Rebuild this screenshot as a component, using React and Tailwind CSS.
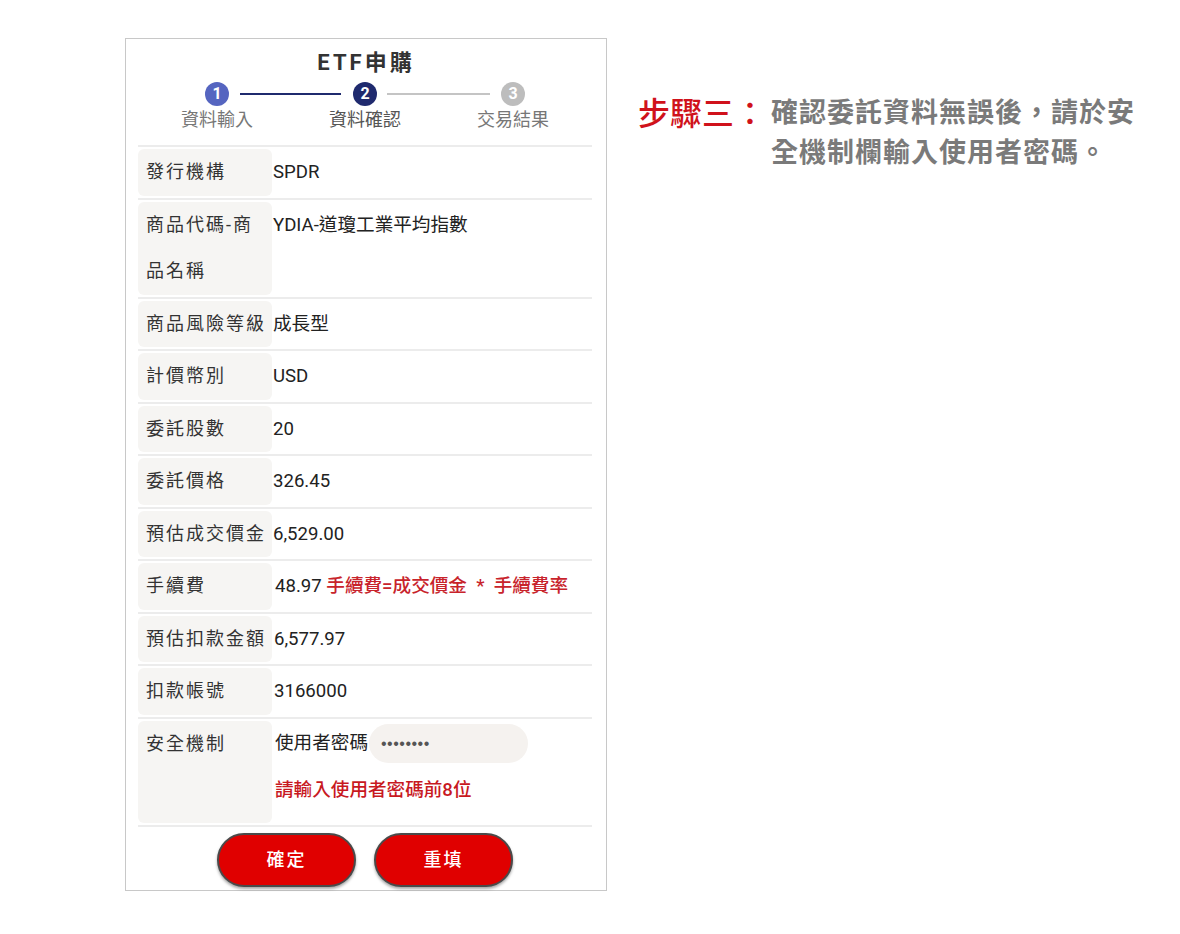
import React from 'react';

const rows = [
    { label: '發行機構', value: 'SPDR' },
    { label: <>商品代碼-商<br />品名稱</>, value: 'YDIA-道瓊工業平均指數' },
    { label: '商品風險等級', value: '成長型' },
    { label: '計價幣別', value: 'USD' },
    { label: '委託股數', value: '20' },
    { label: '委託價格', value: '326.45' },
    { label: '預估成交價金', value: '6,529.00' },
    {
        label: '手續費',
        value: (
            <span className="pl-[2px]">
                48.97 <span className="font-medium text-[#c8232b]">手續費=成交價金&nbsp;&nbsp;*&nbsp;&nbsp;手續費率</span>
            </span>
        ),
    },
    { label: '預估扣款金額', value: <span className="pl-[1px]">6,577.97</span> },
    { label: '扣款帳號', value: <span className="pl-[1px]">3166000</span> },
];

function Row({ label, children }) {
    return (
        <div className="flex border-t-2 border-[#ececec] py-[2px]">
            <div className="w-[134px] shrink-0 whitespace-nowrap rounded-md bg-[#f6f5f3] pl-2 text-[18px] leading-[46.5px] tracking-[2px] text-[#333]">
                {label}
            </div>
            <div className="pl-[1px] text-[18.6px] leading-[46.5px] text-[#222]">{children}</div>
        </div>
    );
}

function Stepper() {
    return (
        <div>
            <div className="mt-[5px] flex items-center pl-[79px]">
                <div className="flex h-[24px] w-[24px] items-center justify-center rounded-full bg-[#5565c0] text-[16px] font-bold leading-none text-white">1</div>
                <div className="ml-[11px] mr-[12px] h-[2px] w-[101px] bg-[#1f2a6e]" />
                <div className="flex h-[24px] w-[24px] items-center justify-center rounded-full bg-[#1f2a6e] text-[16px] font-bold leading-none text-white">2</div>
                <div className="ml-[10px] mr-[11px] h-[2px] w-[103px] bg-[#c4c4c4]" />
                <div className="flex h-[24px] w-[24px] items-center justify-center rounded-full bg-[#bdbdbd] text-[16px] font-bold leading-none text-white">3</div>
            </div>
            <div className="mt-[2px] grid w-[461px] grid-cols-3 pl-[17px] text-[18px] leading-[24px]">
                <div className="text-center text-[#777]">資料輸入</div>
                <div className="text-center text-[#555]">資料確認</div>
                <div className="text-center text-[#777]">交易結果</div>
            </div>
        </div>
    );
}

export default function App() {
    return (
        <div className="flex min-h-[934px] w-[1180px] gap-[31px] bg-white pl-[125px] pt-[38px]">
            <div className="flex h-[853px] w-[482px] shrink-0 flex-col border border-[#c8c8c8] font-['Roboto','Noto_Sans_CJK_TC',sans-serif] text-[18px]">
                <div className="pt-[10px] text-center text-[22px] font-bold leading-[28px] tracking-[3px] text-[#333]">ETF申購</div>
                <Stepper />
                <div className="mt-[13px] pl-[12px] pr-[14px]">
                    {rows.map((r, i) => (
                        <Row key={i} label={r.label}>{r.value}</Row>
                    ))}
                    <div className="flex border-t-2 border-[#ececec] py-[2px]">
                        <div className="w-[134px] shrink-0 rounded-md bg-[#f6f5f3] pl-2 leading-[46px] tracking-[2px] text-[#333]">安全機制</div>
                        <div className="pb-[10px] pl-[3px] text-[18.6px]">
                            <div className="flex h-[46px] items-center">
                                <span className="text-[#222]">使用者密碼</span>
                                <div className="ml-[1px] flex h-[39px] w-[159px] items-center rounded-full bg-[#f5f2ef] pl-[12px] font-['Liberation_Sans',sans-serif] text-[16px] tracking-[0.5px] text-[#555]">
                                    ••••••••
                                </div>
                            </div>
                            <div className="font-medium leading-[46px] text-[#c8191f]">請輸入使用者密碼前8位</div>
                        </div>
                    </div>
                    <div className="flex justify-center gap-[18px] border-t-2 border-[#ececec] pt-[6px]">
                        <button type="button" className="h-[54px] w-[139px] rounded-full border-2 border-[#4a4a4a] bg-[#e00000] text-[18px] font-medium tracking-[2px] text-white shadow-[0_2px_3px_rgba(0,0,0,0.35)]">
                            確定
                        </button>
                        <button type="button" className="h-[54px] w-[139px] rounded-full border-2 border-[#4a4a4a] bg-[#e00000] text-[18px] font-medium tracking-[2px] text-white shadow-[0_2px_3px_rgba(0,0,0,0.35)]">
                            重填
                        </button>
                    </div>
                </div>
            </div>
            <div className="mt-[53px] flex font-['Noto_Sans_CJK_TC',sans-serif]">
                <div className="w-[133px] shrink-0 text-[32px] font-medium leading-[40px] text-[#d0121b]">步驟三：</div>
                <div className="text-[27px] font-bold leading-[40px] tracking-[1px] text-[#7a7a7a]">
                    確認委託資料無誤後，請於安<br />全機制欄輸入使用者密碼。
                </div>
            </div>
        </div>
    );
}
